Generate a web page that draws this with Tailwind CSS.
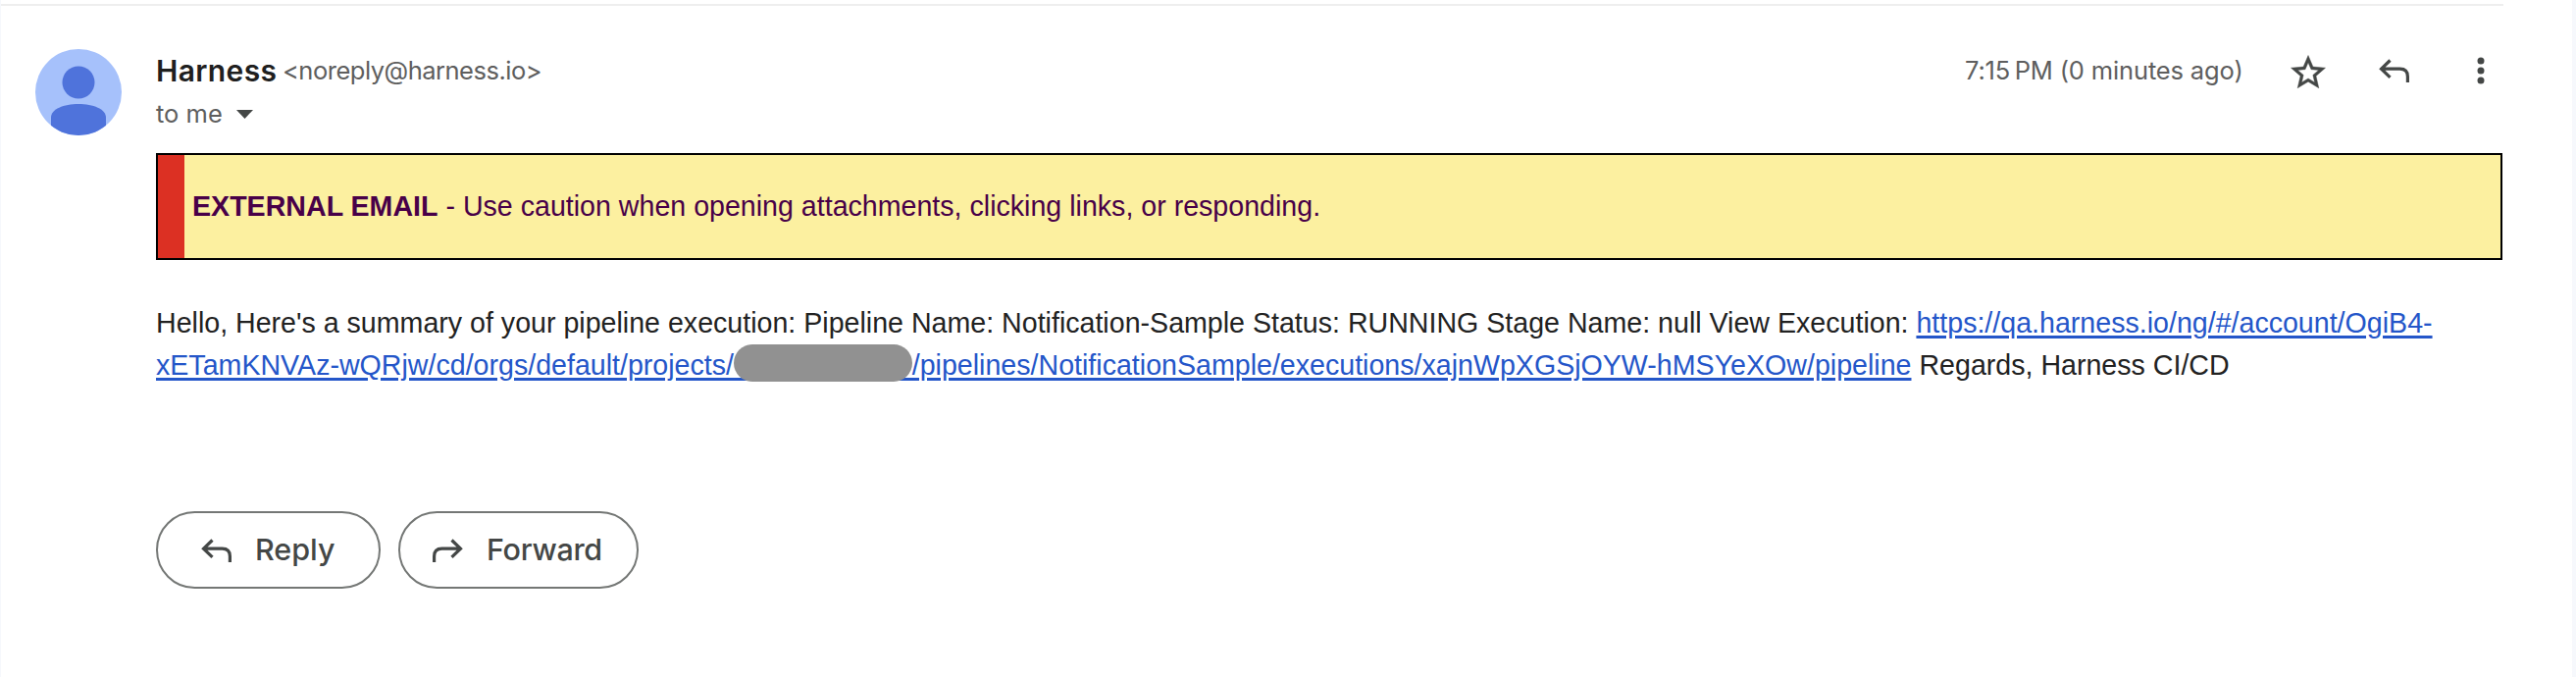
<!DOCTYPE html>
<html lang="en"><head><meta charset="utf-8"><title>Mail</title>
<script src="https://cdn.jsdelivr.net/npm/@tailwindcss/browser@4"></script></head>
<body class="bg-[#f6f8fc] font-['Liberation_Sans',sans-serif]">
<main class="ml-px mr-[4px] h-[690px] overflow-hidden bg-white pt-1">
  <div class="mr-[70px] border-t-2 border-[#eeeeee]"></div>
  <article class="flex pl-[35px] pr-[71px] pt-[44px]">
    <svg class="size-[88px] shrink-0" viewBox="0 0 88 88"><defs><clipPath id="c"><circle cx="44" cy="44" r="44"/></clipPath></defs><g clip-path="url(#c)"><rect width="88" height="88" fill="#a6c1fb"/><circle cx="44" cy="34" r="16.500" fill="#4f73db"/><path d="M16 88V70C16 61 29 56 44 56s28 5 28 14v18z" fill="#4f73db"/></g></svg>
    <div class="ml-[35px] grow">
      <header class="flex h-[106px] justify-between font-[Inter,sans-serif] text-[#5e5e5e]">
        <div>
          <div class="flex h-[44px] items-center whitespace-nowrap"><span class="w-[129px] text-[30px] font-semibold tracking-[0.35px] text-[#1f1f1f]">Harness</span><span class="pt-px text-[25.5px] tracking-[-0.5px]">&lt;noreply@harness.io&gt;</span></div>
          <div class="flex h-[44px] items-center text-[25.5px]"><span class="w-[82px] whitespace-nowrap">to me</span><svg class="h-[9px] w-[17px]" viewBox="0 0 17 9"><path d="M0 0h17L8.500 9z" fill="#444746"/></svg></div>
        </div>
        <div class="flex h-[44px] items-center text-[25.5px]">
          <span class="w-[329px] whitespace-nowrap pt-px tracking-[-0.15px]">7:15&#8201;PM (0 minutes ago)</span>
          <svg class="mt-[4px] size-[42px]" viewBox="0 0 24 24" fill="#444746" stroke="#444746" stroke-width=".25"><path d="M22 9.240l-7.190-.620L12 2 9.190 8.630 2 9.240l5.460 4.730L5.820 21 12 17.270 18.180 21l-1.630-7.030L22 9.240zM12 15.400l-3.760 2.270 1-4.280-3.320-2.880 4.380-.380L12 6.100l1.710 4.040 4.380.380-3.320 2.880 1 4.280L12 15.400z"/></svg>
          <svg class="ml-[51px] h-6 w-8" viewBox="0 0 32 24" fill="none" stroke="#444746" stroke-width="3.200"><path d="M11.500 1.500 2.500 10.200l9 8.700M2.500 10.200H21.500q7.900 0 7.900 7.900V24"/></svg>
          <svg class="ml-[68px] mr-[18px] h-7 w-[8px]" viewBox="0 0 8 28" fill="#444746"><circle cx="4" cy="4" r="3.500"/><circle cx="4" cy="14" r="3.500"/><circle cx="4" cy="24" r="3.500"/></svg>
        </div>
      </header>
      <section class="flex h-[109px] items-center border-2 border-black bg-[#fcf0a0] text-[28.6px] text-[#480048]"><div class="h-full w-[27px] bg-[#dc3023]"></div><p class="ml-[8px]"><b>EXTERNAL EMAIL</b> - Use caution when opening attachments, clicking links, or responding.</p></section>
      <div class="mt-[43px] whitespace-nowrap text-[28.6px] leading-[43px] text-[#222222]">
        <p>Hello, Here's a summary of your pipeline execution: Pipeline Name: Notification-Sample Status: RUNNING Stage Name: null View Execution: <a class="text-[#2456c9] underline decoration-[2.5px] underline-offset-[3px]">https://qa.harness.io/ng/#/account/OgiB4-</a></p>
        <p><a class="text-[#2456c9] underline decoration-[2.5px] underline-offset-[3px]">xETamKNVAz-wQRjw/cd/orgs/default/projects/<span class="relative -mr-px">&nbsp;&nbsp;&nbsp;&nbsp;&nbsp;&nbsp;&nbsp;&nbsp;&nbsp;&nbsp;&nbsp;&nbsp;&nbsp;&nbsp;&nbsp;&nbsp;&nbsp;&nbsp;&nbsp;&nbsp;&nbsp;&nbsp;&nbsp;<span class="absolute -top-[5px] left-0 h-[38px] w-[182px] rounded-full bg-[#919191]"></span></span>/pipelines/NotificationSample/executions/xajnWpXGSjOYW-hMSYeXOw/pipeline</a> Regards, Harness CI/CD</p>
      </div>
      <div class="mt-[127px] flex gap-[18px] font-[Inter,sans-serif] text-[30.500px] font-medium text-[#444746]">
        <div class="flex h-[79px] w-[229px] items-center whitespace-nowrap rounded-full border-2 border-[#747775] pl-[44px]"><svg class="h-6 w-8 shrink-0" viewBox="0 0 32 24" fill="none" stroke="#444746" stroke-width="3.200"><path d="M11.500 1.500 2.500 10.200l9 8.700M2.500 10.200H21.500q7.900 0 7.900 7.900V24"/></svg><span class="-mt-[2px] ml-[23px]">Reply</span></div>
        <div class="flex h-[79px] w-[245px] items-center whitespace-nowrap rounded-full border-2 border-[#747775] pl-[32px]"><svg class="h-6 w-8 shrink-0" viewBox="0 0 32 24" fill="none" stroke="#444746" stroke-width="3.200"><path d="M20.500 1.500l9 8.700-9 8.700M29.500 10.200H10.500q-7.900 0-7.900 7.900V24"/></svg><span class="-mt-[2px] ml-[24px] tracking-[-0.3px]">Forward</span></div>
      </div>
    </div>
  </article>
</main></body></html>
